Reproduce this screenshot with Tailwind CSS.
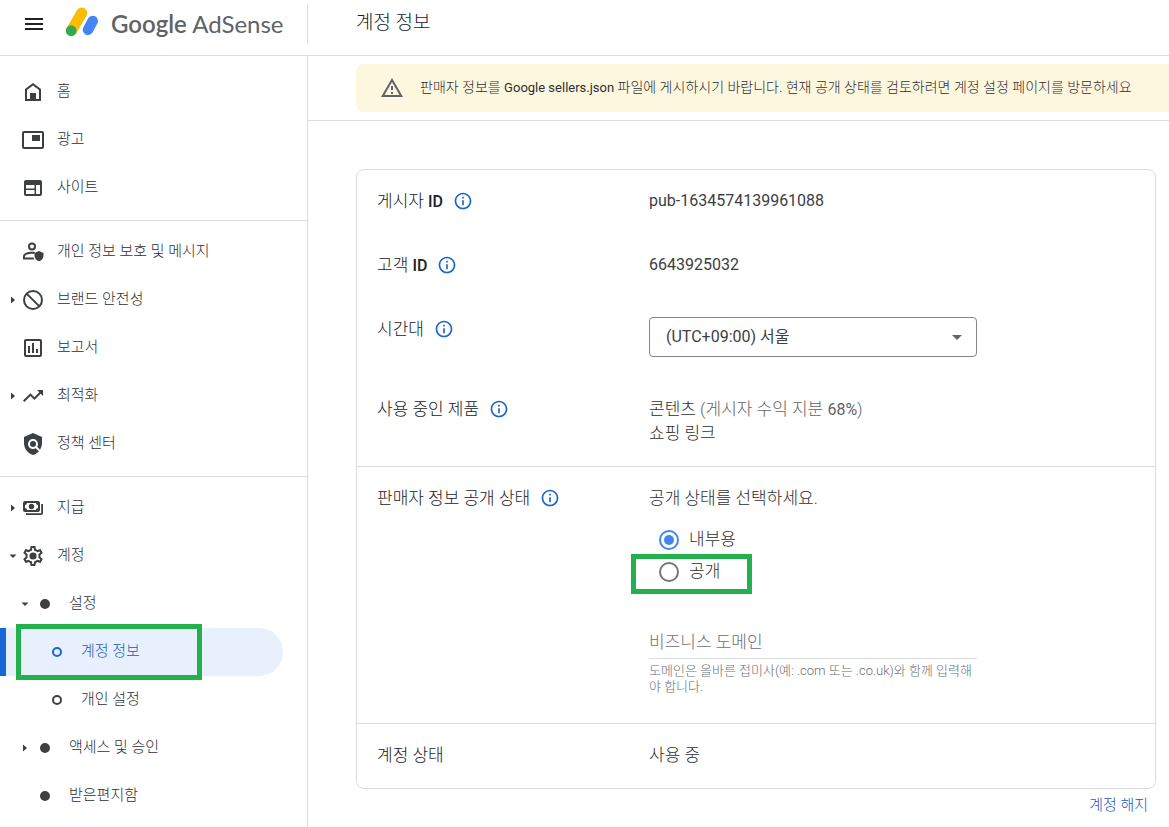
<!DOCTYPE html>
<html lang="ko">
<head>
<meta charset="utf-8">
<meta name="viewport" content="width=device-width, initial-scale=1">
<title>Google AdSense - 계정 정보</title>
<script src="https://cdn.jsdelivr.net/npm/@tailwindcss/browser@4"></script>
</head>
<body class="flex min-h-screen flex-col bg-white font-['Roboto','Noto_Sans_CJK_KR',sans-serif] font-light text-[#2c2f32]">

<svg class="hidden" aria-hidden="true">
  <symbol id="info" viewBox="0 0 24 24"><path d="M11 17h2v-6h-2v6zm1-15C6.480 2 2 6.480 2 12s4.480 10 10 10 10-4.480 10-10S17.520 2 12 2zm0 18c-4.410 0-8-3.590-8-8s3.590-8 8-8 8 3.590 8 8-3.590 8-8 8zM11 9h2V7h-2v2z"/></symbol>
  <symbol id="right" viewBox="0 0 8 8"><path d="M2 0.500L6 4 2 7.500z"/></symbol>
  <symbol id="down" viewBox="0 0 8 8"><path d="M0.500 2.500h7L4 6z"/></symbol>
</svg>

<header class="flex h-14 border-b border-[#dadce0]">
  <div class="flex w-[308px] shrink-0 items-start pl-[22px]">
    <button type="button" aria-label="메뉴" class="mt-3"><svg class="size-6 fill-[#202124]" viewBox="0 0 24 24"><path d="M3 18h18v-2H3v2zm0-5h18v-2H3v2zm0-7v2h18V6H3z"/></svg></button>
    <a href="#" class="ml-4 flex items-center">
      <svg class="h-11 w-11" viewBox="62 0 44 44" fill="none" stroke-linecap="round"><path d="M81.700 13L71.500 30.500" stroke="#fbbc04" stroke-width="11"/><path d="M92.700 21L88 29.800" stroke="#4285f4" stroke-width="10.500"/><circle cx="71.200" cy="30.700" r="5.400" fill="#34a853"/></svg>
      <span class="ml-[5px] mt-1 whitespace-nowrap font-['Lato',sans-serif] text-[24px] leading-10 font-normal text-[#5f6368]"><span class="font-semibold">Google</span> AdSense</span>
    </a>
    <div class="mt-1 ml-auto h-10 border-r border-[#dadce0]"></div>
  </div>
  <h1 class="pt-[9px] pl-12 text-[19px] leading-7 text-[#202124]">계정 정보</h1>
</header>

<div class="flex grow">
  <nav class="w-[308px] shrink-0 border-r border-[#dadce0] pt-3 text-[15px] leading-5">
    <a href="#" class="flex h-12 items-center pl-[21px]"><svg class="size-6 fill-[#3c4043]" viewBox="0 0 24 24"><path fill-rule="evenodd" d="M4 21V9l8-6 8 6v12zM6 19h3v-6h6v6h3v-9l-6-4.500L6 10z"/><path d="M9 13h6v7H9z"/></svg><span class="ml-3 pb-0.5">홈</span></a>
    <a href="#" class="flex h-12 items-center pl-[21px]"><svg class="size-6 fill-[#3c4043]" viewBox="0 0 24 24"><path d="M19 7h-8v6h8V7zm2-4H3c-1.100 0-2 .9-2 2v14c0 1.100.9 2 2 2h18c1.100 0 2-.9 2-2V5c0-1.100-.9-2-2-2zm0 16H3V5h18v14z"/></svg><span class="ml-3 pb-0.5">광고</span></a>
    <a href="#" class="flex h-12 items-center pl-[21px]"><svg class="size-6 fill-[#3c4043]" viewBox="0 0 24 24"><path fill-rule="evenodd" d="M5 4h14c1.100 0 2 .9 2 2v12c0 1.100-.9 2-2 2H5c-1.100 0-2-.9-2-2V6c0-1.100.9-2 2-2zM5 9v3.500h8.500V9zM5 14v4h8.500v-4zM15 9v9h4V9z"/></svg><span class="ml-3 pb-0.5">사이트</span></a>
    <hr class="mt-2 mb-[7px] border-[#dadce0]">
    <a href="#" class="flex h-12 items-center pl-[21px]"><svg class="size-6 fill-[#3c4043]" viewBox="0 0 24 24"><path fill-rule="evenodd" d="M11 2.500a4 4 0 1 0 0 8 4 4 0 0 0 0-8zm0 2a2 2 0 1 1 0 4 2 2 0 0 1 0-4zM2 19.500v-3.500c0-2.700 5-4.200 9-4.200 1.100 0 2.200.1 3.200.3l-1.200 1.900c-4-.6-9 .8-9 2v1.500h8.500l.8 2z"/><path d="M18 11l-4.500 2v2.700c0 2.600 1.900 4.900 4.500 5.500 2.600-.6 4.500-2.900 4.500-5.500V13z"/></svg><span class="ml-3 pb-0.5">개인 정보 보호 및 메시지</span></a>
    <a href="#" class="flex h-12 items-center pl-[9px]"><svg class="mr-1 size-2 fill-[#3c4043]"><use href="#right"/></svg><svg class="size-6 fill-none stroke-[#3c4043] stroke-2" viewBox="0 0 24 24"><circle cx="12" cy="12" r="9"/><path d="M5.600 5.600L18.400 18.400"/></svg><span class="ml-3 pb-0.5">브랜드 안전성</span></a>
    <a href="#" class="flex h-12 items-center pl-[21px]"><svg class="size-6 fill-[#3c4043]" viewBox="0 0 24 24"><path d="M19 3H5c-1.100 0-2 .9-2 2v14c0 1.100.9 2 2 2h14c1.100 0 2-.9 2-2V5c0-1.100-.9-2-2-2zm0 16H5V5h14v14zM7 10h2v7H7zm4-3h2v10h-2zm4 6h2v4h-2z"/></svg><span class="ml-3 pb-0.5">보고서</span></a>
    <a href="#" class="flex h-12 items-center pl-[9px]"><svg class="mr-1 size-2 fill-[#3c4043]"><use href="#right"/></svg><svg class="size-6 fill-[#3c4043]" viewBox="0 0 24 24"><path d="M16 6l2.290 2.290-4.880 4.880-4-4L2 16.590 3.410 18l6-6 4 4 6.300-6.290L22 12V6z"/></svg><span class="ml-3 pb-0.5">최적화</span></a>
    <a href="#" class="flex h-12 items-center pl-[21px]"><svg class="size-6 fill-[#3c4043]" viewBox="0 0 24 24"><path d="M21 5l-9-4-9 4v6c0 5.550 3.840 10.740 9 12 2.300-.56 4.330-1.900 5.880-3.710l-3.120-3.120c-1.940 1.290-4.580 1.070-6.290-.64-1.950-1.950-1.950-5.120 0-7.070 1.950-1.950 5.120-1.950 7.070 0 1.710 1.710 1.920 4.350.64 6.290l2.900 2.900C20.290 15.690 21 13.380 21 11V5z"/><circle cx="12" cy="12" r="3"/></svg><span class="ml-3 pb-0.5">정책 센터</span></a>
    <hr class="mt-2 mb-[7px] border-[#dadce0]">
    <a href="#" class="flex h-12 items-center pl-[9px]"><svg class="mr-1 size-2 fill-[#3c4043]"><use href="#right"/></svg><svg class="size-6 fill-[#3c4043]" viewBox="0 0 24 24"><path fill-rule="evenodd" d="M4 5h13c1.100 0 2 .9 2 2v7c0 1.100-.9 2-2 2H4c-1.100 0-2-.9-2-2V7c0-1.100.9-2 2-2zM6 7a2 2 0 0 1-2 2v3a2 2 0 0 1 2 2h9a2 2 0 0 1 2-2V9a2 2 0 0 1-2-2z"/><circle cx="10.500" cy="10.500" r="2.700"/><path d="M20.200 8H22v9c0 1.100-.9 2-2 2H5v-1.800h15.200z"/></svg><span class="ml-3 pb-0.5">지급</span></a>
    <a href="#" class="flex h-12 items-center pl-[9px]"><svg class="mr-1 size-2 fill-[#3c4043]"><use href="#down"/></svg><svg class="size-6 fill-[#3c4043]" viewBox="0 0 24 24"><path d="M19.430 12.980c.04-.32.07-.64.07-.98 0-.34-.03-.66-.07-.98l2.110-1.650c.19-.15.24-.42.12-.64l-2-3.460c-.09-.16-.26-.25-.44-.25-.06 0-.12.01-.17.03l-2.490 1c-.52-.4-1.080-.73-1.690-.98l-.38-2.650C14.460 2.180 14.250 2 14 2h-4c-.25 0-.46.18-.49.42l-.38 2.650c-.61.25-1.170.59-1.690.98l-2.490-1c-.06-.02-.12-.03-.18-.03-.17 0-.34.09-.43.25l-2 3.460c-.13.22-.07.49.12.64l2.110 1.650c-.04.32-.07.65-.07.98 0 .33.03.66.07.98l-2.110 1.650c-.19.15-.24.42-.12.64l2 3.460c.09.16.26.25.44.25.06 0 .12-.01.17-.03l2.490-1c.52.4 1.080.73 1.690.98l.38 2.650c.03.24.24.42.49.42h4c.25 0 .46-.18.49-.42l.38-2.650c.61-.25 1.170-.59 1.690-.98l2.490 1c.06.02.12.03.18.03.17 0 .34-.09.43-.25l2-3.460c.12-.22.07-.49-.12-.64l-2.110-1.650zm-1.980-1.710c.04.31.05.52.05.73 0 .21-.02.43-.05.73l-.14 1.130.89.7 1.080.84-.7 1.210-1.270-.51-1.040-.42-.9.68c-.43.32-.84.56-1.250.73l-1.060.43-.16 1.130-.2 1.350h-1.400l-.19-1.350-.16-1.130-1.060-.43c-.43-.18-.83-.41-1.230-.71l-.91-.7-1.060.43-1.270.51-.7-1.210 1.080-.84.89-.7-.14-1.130c-.03-.31-.05-.54-.05-.74s.02-.43.05-.73l.14-1.130-.89-.7-1.080-.84.7-1.210 1.270.51 1.040.42.9-.68c.43-.32.84-.56 1.250-.73l1.060-.43.16-1.130.2-1.350h1.390l.19 1.350.16 1.130 1.060.43c.43.18.83.41 1.230.71l.91.7 1.060-.43 1.270-.51.7 1.210-1.070.85-.89.7.14 1.130z"/><circle cx="12" cy="12" r="3.600"/></svg><span class="ml-3 pb-0.5">계정</span></a>
    <a href="#" class="flex h-12 items-center pl-[21px]"><svg class="mr-1 size-2 fill-[#3c4043]"><use href="#down"/></svg><svg class="size-6 fill-[#3c4043]" viewBox="0 0 24 24"><circle cx="12" cy="12" r="5"/></svg><span class="ml-3 pb-0.5">설정</span></a>
    <a href="#" aria-current="page" class="relative mr-6 flex h-12 items-center rounded-r-full border-l-6 border-[#1967d2] bg-[#e8f0fe] pl-[39px] text-[#185abc]"><svg class="size-6 fill-none stroke-[#1967d2] stroke-2" viewBox="0 0 24 24"><circle cx="12" cy="12" r="4"/></svg><span class="ml-3 pb-0.5">계정 정보</span><span class="absolute -top-1 -bottom-1 left-[10px] w-[186px] border-5 border-[#22b14c]"></span></a>
    <a href="#" class="flex h-12 items-center pl-[45px]"><svg class="size-6 fill-none stroke-[#3c4043] stroke-2" viewBox="0 0 24 24"><circle cx="12" cy="12" r="4"/></svg><span class="ml-3 pb-0.5">개인 설정</span></a>
    <a href="#" class="flex h-12 items-center pl-[21px]"><svg class="mr-1 size-2 fill-[#3c4043]"><use href="#right"/></svg><svg class="size-6 fill-[#3c4043]" viewBox="0 0 24 24"><circle cx="12" cy="12" r="5"/></svg><span class="ml-3 pb-0.5">액세스 및 승인</span></a>
    <a href="#" class="flex h-12 items-center pl-[33px]"><svg class="size-6 fill-[#3c4043]" viewBox="0 0 24 24"><circle cx="12" cy="12" r="5"/></svg><span class="ml-3 pb-0.5">받은편지함</span></a>
  </nav>

  <main class="min-w-0 grow">
    <div class="border-b border-[#dadce0] pt-2 pb-2 pl-12">
      <div role="status" class="flex h-12 items-center rounded-l-lg bg-[#fef7e0] pl-6 text-sm">
        <svg class="size-6 shrink-0 fill-[#5f6368]" viewBox="0 0 24 24"><path d="M12 5.990L19.530 19H4.470L12 5.990M12 2L1 21h22L12 2zm1 14h-2v2h2v-2zm0-6h-2v4h2v-4z"/></svg>
        <p class="ml-4 pb-0.5">판매자 정보를 <span class="text-[13px] leading-none font-normal">Google sellers.json</span> 파일에 게시하시기 바랍니다. 현재 공개 상태를 검토하려면 계정 설정 페이지를 방문하세요</p>
      </div>
    </div>

    <div class="pt-12 pr-[13px] pl-12 text-[17px] leading-6">
      <div class="rounded-lg border border-[#dadce0]">
        <section class="grid grid-cols-[272px_1fr] gap-y-10 px-5 pt-[19px] pb-[21px]">
          <div class="flex h-6 items-center gap-[10px] text-[#202124]"><span>게시자 <span class="text-[16px] leading-none font-medium">ID</span></span><button type="button" aria-label="도움말"><svg class="size-5 fill-[#1a66c4]"><use href="#info"/></svg></button></div>
          <div class="text-base leading-6 font-normal text-[#3c4043]">pub-1634574139961088</div>
          <div class="flex h-6 items-center gap-[10px] text-[#202124]"><span>고객 <span class="text-[16px] leading-none font-medium">ID</span></span><button type="button" aria-label="도움말"><svg class="size-5 fill-[#1a66c4]"><use href="#info"/></svg></button></div>
          <div class="text-base leading-6 font-normal text-[#3c4043]">6643925032</div>
          <div class="flex h-6 items-center gap-[10px] self-start text-[#202124]"><label for="tz">시간대</label><button type="button" aria-label="도움말"><svg class="size-5 fill-[#1a66c4]"><use href="#info"/></svg></button></div>
          <div class="relative h-10 w-82">
            <select id="tz" class="block h-10 w-full appearance-none rounded border border-[#80868b] bg-white pl-4 text-base font-normal text-[#3c4043]"><option>(UTC+09:00) 서울</option></select>
            <svg class="pointer-events-none absolute top-2 right-2 size-6 fill-[#5f6368]" viewBox="0 0 24 24"><path d="M7 10l5 5 5-5z"/></svg>
          </div>
          <div class="flex h-6 items-center gap-[10px] self-start text-[#202124]"><span>사용 중인 제품</span><button type="button" aria-label="도움말"><svg class="size-5 fill-[#1a66c4]"><use href="#info"/></svg></button></div>
          <div><p>콘텐츠 <span class="text-[#5f6368]">(게시자 수익 지분 <span class="text-[16px] leading-none font-normal">68%</span>)</span></p><p>쇼핑 링크</p></div>
        </section>

        <section class="grid grid-cols-[272px_1fr] border-t border-[#dadce0] px-5 pt-[19px] pb-7">
          <div class="flex h-6 items-center gap-[10px] self-start text-[#202124]"><span>판매자 정보 공개 상태</span><button type="button" aria-label="도움말"><svg class="size-5 fill-[#1a66c4]"><use href="#info"/></svg></button></div>
          <div>
            <fieldset>
              <legend>공개 상태를 선택하세요.</legend>
              <div class="mt-[14px] flex h-8 items-center gap-[10px] pl-[10px]"><input type="radio" id="r1" name="vis" checked class="size-5 appearance-none rounded-full border-2 border-[#757575] bg-clip-content p-[3px] checked:border-[#4285f4] checked:bg-[#4285f4]"><label for="r1" class="pb-0.5">내부용</label></div>
              <div class="relative flex h-8 items-center gap-[10px] pl-[10px]"><input type="radio" id="r2" name="vis" class="size-5 appearance-none rounded-full border-2 border-[#757575] bg-clip-content p-[3px] checked:border-[#4285f4] checked:bg-[#4285f4]"><label for="r2" class="pb-0.5">공개</label><span class="pointer-events-none absolute -top-0.5 -left-[18px] h-10 w-[121px] border-5 border-[#22b14c]"></span></div>
            </fieldset>
            <div class="mt-[38px] w-82">
              <input type="text" aria-label="비즈니스 도메인" aria-describedby="hint" placeholder="비즈니스 도메인" class="block h-[33px] w-full border-b border-[#dadce0] placeholder:text-[#6b7075]">
              <p id="hint" class="mt-1 text-[13px] leading-4 break-all text-[#6b7075]">도메인은 올바른 접미사(예: .com 또는 .co.uk)와 함께 입력해야 합니다.</p>
            </div>
          </div>
        </section>

        <section class="grid grid-cols-[272px_1fr] border-t border-[#dadce0] px-5 pt-[19px] pb-[21px]">
          <div class="text-[#202124]">계정 상태</div>
          <div>사용 중</div>
        </section>
      </div>
      <div class="mt-1 pr-2 text-right text-[15px]"><a href="#" class="text-[#185abc]">계정 해지</a></div>
    </div>
  </main>
</div>
</body>
</html>
